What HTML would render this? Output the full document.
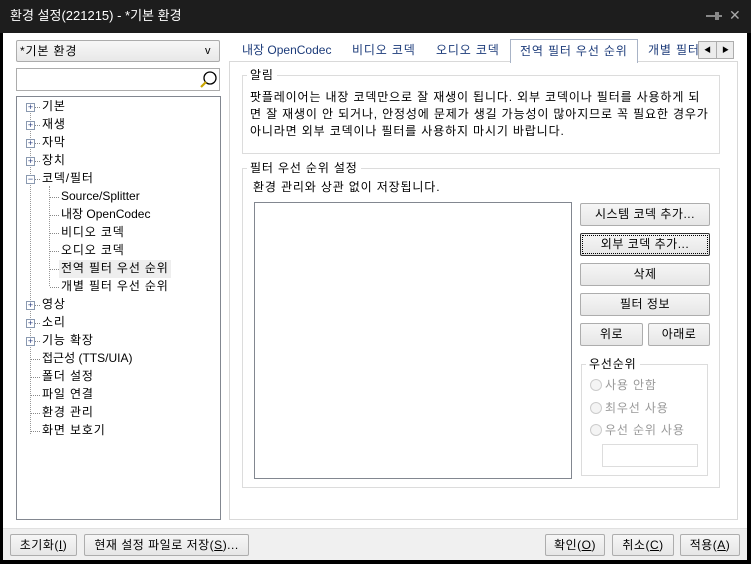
<!DOCTYPE html>
<html><head><meta charset="utf-8"><style>
*{margin:0;padding:0;box-sizing:border-box}
body{width:751px;height:564px;background:#000;position:relative;overflow:hidden;font-family:"Liberation Sans","Noto Sans CJK KR","NanumGothic",sans-serif;font-size:12px;color:#000}
.a{position:absolute}
.t{position:absolute;white-space:nowrap;line-height:14px}
.k{letter-spacing:0.85px}
.btn{position:absolute;border:1px solid #adadad;background:linear-gradient(#f6f6f6,#e6e6e6);border-radius:2px;text-align:center;line-height:20px;font-size:12px;letter-spacing:0.5px}
.pm{position:absolute;width:9px;height:9px;border:1px solid #8a99b0;background:#fff;font-size:9px;line-height:7px;text-align:center;color:#2a3f80}
.dot{position:absolute;border-top:1px dotted #888;width:6px}
.grp{position:absolute;border:1px solid #dcdcdc}
.lg{position:absolute;background:#fff;padding:0 3px;line-height:14px;letter-spacing:0.85px}
.rad{position:absolute;width:12px;height:12px;border:1px solid #ccc;border-radius:50%;background:#f4f4f4}
</style></head><body>
<div class="a" style="left:0;top:0;width:751px;height:33px;background:#1d1d1d"></div>
<div class="t" style="left:10px;top:9px;color:#fff;font-size:13px">환경 설정(221215) - *기본 환경</div>
<svg class="a" style="left:706px;top:10px" width="16" height="12"><rect x="0" y="5" width="9" height="2" fill="#888"/><rect x="9" y="2" width="4" height="8" fill="#888"/><rect x="13" y="5" width="3" height="2" fill="#888"/></svg>
<div class="t" style="left:729px;top:8px;color:#aaa;font-size:14px">✕</div>
<div class="a" style="left:3px;top:33px;width:744px;height:527px;background:#fff"></div>
<div class="a" style="left:3px;top:528px;width:744px;height:32px;background:#f0f0f0;border-top:1px solid #e0e0e0"></div>
<div class="a" style="left:16px;top:40px;width:204px;height:22px;border:1px solid #acacac;background:linear-gradient(#f7f7f7,#e8e8e8);border-radius:2px"></div>
<div class="t k" style="left:20px;top:44px">*기본 환경</div>
<div class="t" style="left:205px;top:44px;font-size:11px">v</div>
<div class="a" style="left:16px;top:68px;width:204px;height:23px;border:1px solid #acacac"></div>
<svg class="a" style="left:199px;top:70px" width="20" height="20"><circle cx="11" cy="8" r="6" fill="none" stroke="#000" stroke-width="1.3"/><line x1="7" y1="12" x2="2" y2="17" stroke="#c9a400" stroke-width="2.2"/></svg>
<div class="a" style="left:16px;top:96px;width:205px;height:424px;border:1px solid #828790"></div>
<div class="a" style="left:30px;top:108px;height:326px;border-left:1px dotted #999"></div>
<div class="a" style="left:49px;top:186px;height:100px;border-left:1px dotted #999"></div>
<div class="a" style="left:59px;top:260px;width:112px;height:18px;background:#eeeeee"></div>
<div id="tree"></div>
<div class="t" style="left:242px;top:43px;color:#1c3b7a">내장 OpenCodec</div>
<div class="t k" style="left:352px;top:43px;color:#1c3b7a">비디오 코덱</div>
<div class="t k" style="left:436px;top:43px;color:#1c3b7a">오디오 코덱</div>
<div class="a" style="left:229px;top:61px;width:509px;height:459px;border:1px solid #d9d9d9"></div>
<div class="a" style="left:510px;top:39px;width:128px;height:24px;border:1px solid #a8b3c6;border-bottom:none;background:#fff"></div>
<div class="t k" style="left:520px;top:44px;color:#1c3b7a">전역 필터 우선 순위</div>
<div class="a" style="left:648px;top:40px;width:50px;height:20px;overflow:hidden"><div class="t k" style="left:0;top:3px;color:#1c3b7a">개별 필터</div></div>
<div class="a" style="left:698px;top:41px;width:36px;height:18px;border:1px solid #adadad;background:#ececec"></div>
<div class="a" style="left:716px;top:41px;width:1px;height:18px;background:#adadad"></div>
<div class="t" style="left:704px;top:44px;font-size:7px">◀</div>
<div class="t" style="left:722px;top:44px;font-size:7px">▶</div>
<div class="grp" style="left:242px;top:75px;width:478px;height:79px"></div>
<div class="lg" style="left:247px;top:68px">알림</div>
<div class="t k" style="left:250px;top:89px;line-height:17px">팟플레이어는 내장 코덱만으로 잘 재생이 됩니다. 외부 코덱이나 필터를 사용하게 되<br>면 잘 재생이 안 되거나, 안정성에 문제가 생길 가능성이 많아지므로 꼭 필요한 경우가<br>아니라면 외부 코덱이나 필터를 사용하지 마시기 바랍니다.</div>
<div class="grp" style="left:242px;top:168px;width:478px;height:320px"></div>
<div class="lg" style="left:247px;top:161px">필터 우선 순위 설정</div>
<div class="t k" style="left:253px;top:180px">환경 관리와 상관 없이 저장됩니다.</div>
<div class="a" style="left:254px;top:202px;width:318px;height:277px;border:1px solid #828790"></div>
<div class="btn" style="left:580px;top:203px;width:130px;height:23px">시스템 코덱 추가...</div>
<div class="btn" style="left:580px;top:233px;width:130px;height:23px;border-color:#333;outline:1px dotted #000;outline-offset:-3px">외부 코덱 추가...</div>
<div class="btn" style="left:580px;top:263px;width:130px;height:23px">삭제</div>
<div class="btn" style="left:580px;top:293px;width:130px;height:23px">필터 정보</div>
<div class="btn" style="left:580px;top:323px;width:63px;height:23px">위로</div>
<div class="btn" style="left:648px;top:323px;width:62px;height:23px">아래로</div>
<div class="grp" style="left:581px;top:364px;width:127px;height:112px"></div>
<div class="lg" style="left:586px;top:357px">우선순위</div>
<div class="rad" style="left:590px;top:379px"></div><div class="t k" style="left:605px;top:378px;color:#999">사용 안함</div>
<div class="rad" style="left:590px;top:402px"></div><div class="t k" style="left:605px;top:401px;color:#999">최우선 사용</div>
<div class="rad" style="left:590px;top:424px"></div><div class="t k" style="left:605px;top:423px;color:#999">우선 순위 사용</div>
<div class="a" style="left:602px;top:444px;width:96px;height:23px;border:1px solid #ddd"></div>
<div class="btn" style="left:10px;top:534px;width:67px;height:22px">초기화(<u>I</u>)</div>
<div class="btn" style="left:84px;top:534px;width:165px;height:22px">현재 설정 파일로 저장(<u>S</u>)...</div>
<div class="btn" style="left:545px;top:534px;width:60px;height:22px">확인(<u>O</u>)</div>
<div class="btn" style="left:612px;top:534px;width:62px;height:22px">취소(<u>C</u>)</div>
<div class="btn" style="left:680px;top:534px;width:60px;height:22px">적용(<u>A</u>)</div>
<script>
var items=[["기본",0,"+"],["재생",0,"+"],["자막",0,"+"],["장치",0,"+"],["코덱/필터",0,"−"],["Source/Splitter",1],["내장 OpenCodec",1],["비디오 코덱",1],["오디오 코덱",1],["전역 필터 우선 순위",1],["개별 필터 우선 순위",1],["영상",0,"+"],["소리",0,"+"],["기능 확장",0,"+"],["접근성 (TTS/UIA)",0],["폴더 설정",0],["파일 연결",0],["환경 관리",0],["화면 보호기",0]];
var h="";items.forEach(function(it,i){var y=99+i*18;var cy=y+8;var k=/[A-Za-z]/.test(it[0])?"":" k";
if(it[1]==0){if(it[2]){h+='<div class="pm" style="left:26px;top:'+(cy-4)+'px">'+(it[2]=="+"?"+":"−")+'</div><div class="dot" style="left:35px;top:'+cy+'px;width:5px"></div>';}else{h+='<div class="dot" style="left:31px;top:'+cy+'px;width:9px"></div>';}
h+='<div class="t'+k+'" style="left:42px;top:'+y+'px">'+it[0]+'</div>';}
else{h+='<div class="dot" style="left:50px;top:'+cy+'px;width:9px"></div><div class="t'+k+'" style="left:61px;top:'+y+'px">'+it[0]+'</div>';}});
document.getElementById("tree").innerHTML=h;
</script>
</body></html>
